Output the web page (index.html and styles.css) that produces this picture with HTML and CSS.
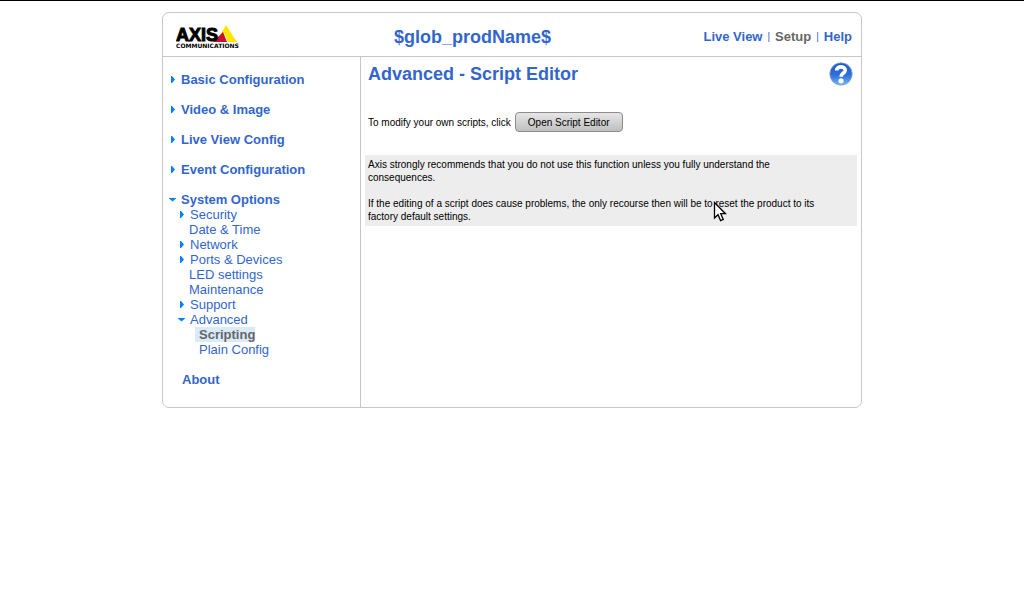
FILE: index.html
```html
<!DOCTYPE html>
<html lang="en">
<head>
<meta charset="utf-8">
<title>Advanced - Script Editor</title>
<link rel="stylesheet" href="styles.css">
</head>
<body>
<div class="panel">
  <header class="header">
    <svg class="logo" width="64" height="26" viewBox="0 0 64 26" role="img" aria-label="Axis Communications">
      <path d="M50 1 61 18H52L48 9 43 13Z" fill="#ffe600"/>
      <path d="M37 18 47 8 51 18Z" fill="#c8102e"/>
      <text class="logo-name" x="0" y="17">AXIS</text>
      <text class="logo-sub" x="0" y="24">COMMUNICATIONS</text>
    </svg>
    <div class="product">$glob_prodName$</div>
    <nav class="top-links">
      <a href="#">Live View</a><span class="bar">|</span><a href="#" class="current">Setup</a><span class="bar">|</span><a href="#">Help</a>
    </nav>
  </header>
  <div class="body">
    <nav class="side">
      <ul class="menu">
        <li><a class="closed" href="#">Basic Configuration</a></li>
        <li><a class="closed" href="#">Video &amp; Image</a></li>
        <li><a class="closed" href="#">Live View Config</a></li>
        <li><a class="closed" href="#">Event Configuration</a></li>
        <li><a class="opened" href="#">System Options</a>
          <ul class="submenu">
            <li><a class="closed" href="#">Security</a></li>
            <li><a class="leaf" href="#">Date &amp; Time</a></li>
            <li><a class="closed" href="#">Network</a></li>
            <li><a class="closed" href="#">Ports &amp; Devices</a></li>
            <li><a class="leaf" href="#">LED settings</a></li>
            <li><a class="leaf" href="#">Maintenance</a></li>
            <li><a class="closed" href="#">Support</a></li>
            <li><a class="opened" href="#">Advanced</a>
              <ul class="pages">
                <li><a class="selected" href="#">Scripting</a></li>
                <li><a href="#">Plain Config</a></li>
              </ul>
            </li>
          </ul>
        </li>
        <li><a class="about" href="#">About</a></li>
      </ul>
    </nav>
    <main class="content">
      <div class="title-row">
        <h1>Advanced - Script Editor</h1>
        <a class="help" href="#" aria-label="Help">
          <svg width="24" height="24" viewBox="0 0 24 24">
            <defs>
              <linearGradient id="ball" x1="0" y1="0" x2="0" y2="1">
                <stop offset="0" stop-color="#1c58c8"/>
                <stop offset=".55" stop-color="#2f70dc"/>
                <stop offset="1" stop-color="#7ab4fa"/>
              </linearGradient>
            </defs>
            <circle cx="12" cy="12" r="11.2" fill="url(#ball)" stroke="#8fa6c8" stroke-width=".8"/>
            <path d="M7.6 8.6C7.6 3.6 16.4 3.8 16.2 8.4 16 11.4 12 11.2 12 14.8" fill="none" stroke="#fff" stroke-width="3.6"/>
            <circle cx="12" cy="18.8" r="2.6" fill="#fff"/>
          </svg>
        </a>
      </div>
      <div class="action">
        <span>To modify your own scripts, click</span>
        <button type="button">Open Script Editor</button>
      </div>
      <div class="notice">
        <p>Axis strongly recommends that you do not use this function unless you fully understand the consequences.</p>
        <p>If the editing of a script does cause problems, the only recourse then will be to reset the product to its factory default settings.</p>
        <svg class="pointer" width="14" height="22" viewBox="0 0 14 22" aria-hidden="true">
          <path d="M1.5 1.5V17L5 13.7 7.6 19.6 10.3 18.4 7.7 12.7H12.5Z" fill="#fff" stroke="#000" stroke-width="1.3"/>
        </svg>
      </div>
    </main>
  </div>
</div>
</body>
</html>
```
FILE: styles.css
```css
* { box-sizing: border-box; }

body {
  margin: 0;
  padding: 11px 16px;
  border-top: 1px solid #000;
  background: #fff;
  color: #000;
  font: 13px/15px "Liberation Sans", Arial, sans-serif;
}

a { color: #36c; text-decoration: none; }
ul { margin: 0; padding: 0; list-style: none; }

.panel {
  max-width: 700px;
  margin: 0 auto;
  border: 1px solid #c6c6c6;
  border-radius: 7px;
}

.header {
  display: grid;
  grid-template-columns: 200px 1fr 200px;
  align-items: center;
  height: 44px;
  padding: 4px 9px 0 13px;
  border-bottom: 1px solid #c6c6c6;
}

.logo { display: block; }
.logo-name {
  font: bold 18px "Liberation Sans", Arial, sans-serif;
  stroke: #000;
  stroke-width: 1px;
}
.logo-sub { font: bold 6px "DejaVu Sans", sans-serif; }

.product {
  padding-left: 18px;
  color: #36c;
  font-size: 18px;
  font-weight: bold;
  line-height: 20px;
}

.top-links {
  display: flex;
  justify-content: flex-end;
  gap: 5px;
  font-weight: bold;
}
.bar { color: #36c; font-size: 10px; font-weight: normal; }
.top-links .current { color: #666; }

.body { display: flex; }

.side {
  flex: 0 0 198px;
  padding: 15px 0 20px 6px;
  border-right: 1px solid #c6c6c6;
}

.menu { display: grid; gap: 15px; font-weight: bold; }
.menu a { display: flex; align-items: center; width: fit-content; }

.closed::before,
.opened::before {
  content: "";
  flex: none;
  background: #0080ff;
}
.closed::before {
  width: 4px;
  height: 7px;
  margin: 0 6px 0 2px;
  clip-path: polygon(0 0, 25% 0, 100% 50%, 25% 100%, 0 100%);
}
.opened::before {
  width: 7px;
  height: 4px;
  margin-right: 5px;
  clip-path: polygon(0 0, 100% 0, 100% 25%, 50% 100%, 0 25%);
}

.submenu { padding-left: 9px; font-weight: normal; }
.leaf { padding-left: 11px; }
.pages { padding-left: 17px; }
.pages a { padding-left: 4px; }
.pages .selected { background: #d9eafa; color: #666; font-weight: bold; }
.about { padding-left: 13px; }

.content {
  flex: 1;
  min-width: 0;
  padding: 5px 4px 12px;
  font-size: 10px;
  line-height: 13px;
}

.title-row {
  display: flex;
  justify-content: space-between;
  align-items: center;
  padding: 0 4px 0 3px;
}
h1 { margin: 0; color: #36c; font-size: 18px; line-height: 20px; }
.help, .help svg { display: block; }

.action {
  display: flex;
  align-items: center;
  gap: 4px;
  margin: 26px 0 23px;
  padding-left: 3px;
}
button {
  height: 20px;
  padding: 0 12px;
  border: 1px solid #8c8c8c;
  border-radius: 4px;
  background: linear-gradient(#e6e6e6, #bfbfbf);
  color: #000;
  font: inherit;
}

.notice {
  position: relative;
  padding: 3px 30px 3px 3px;
  background: #ededed;
}
.notice p { margin: 0; }
.notice p + p { margin-top: 13px; }
.pointer { position: absolute; left: 348px; top: 46px; }
```
